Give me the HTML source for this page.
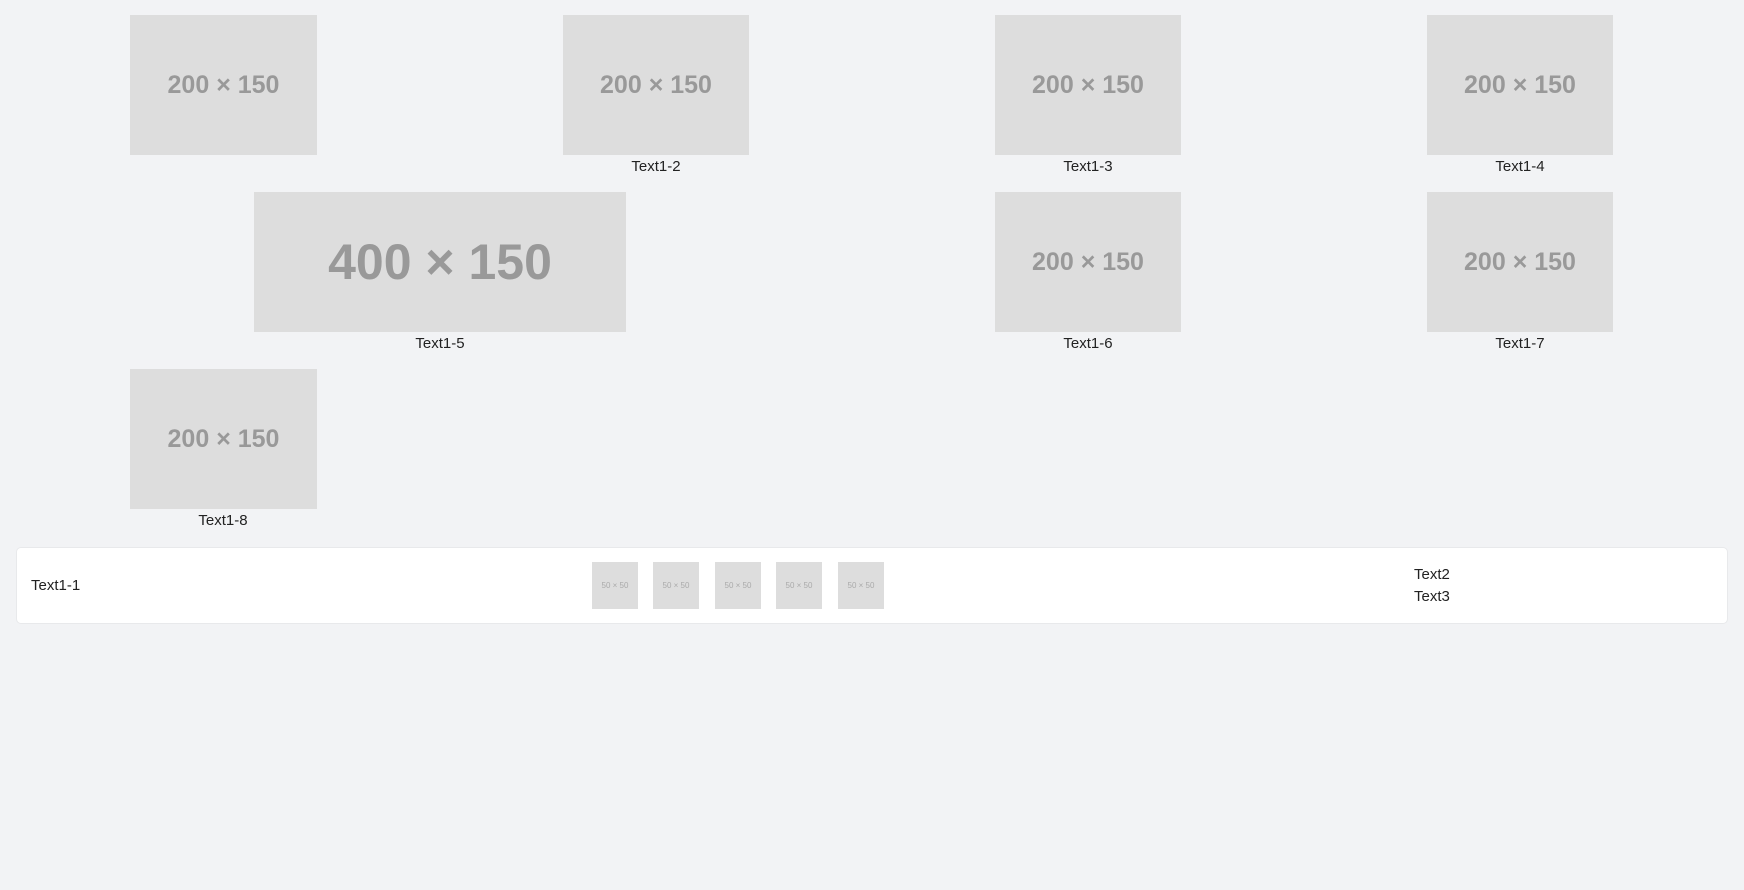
<!DOCTYPE html>
<html><head><meta charset="utf-8"><style>
body{margin:0;width:1744px;height:890px;background:#f2f3f5;position:relative;overflow:hidden;font-family:"Liberation Sans",sans-serif;color:#222;}
.b{position:absolute;background:#dddddd;color:#999;display:flex;align-items:center;justify-content:center;font-weight:bold;font-size:25px;}
.l{position:absolute;font-size:15px;text-align:center;width:200px;line-height:18px;}
.p{position:absolute;left:16px;top:547px;width:1710px;height:75px;background:#fff;border-radius:5px;border:1px solid #e8e9eb;}
.t{position:absolute;background:#dddddd;color:#aaa;font-size:8px;display:flex;align-items:center;justify-content:center;width:46px;height:47px;top:562px;}
.s{position:absolute;font-size:15px;line-height:18px;}
</style></head><body>
<div class="b" style="left:130px;top:15px;width:187px;height:140px">200 × 150</div>
<div class="b" style="left:563px;top:15px;width:186px;height:140px">200 × 150</div>
<div class="b" style="left:995px;top:15px;width:186px;height:140px">200 × 150</div>
<div class="b" style="left:1427px;top:15px;width:186px;height:140px">200 × 150</div>
<div class="l" style="left:556px;top:158px">Text1-2</div>
<div class="l" style="left:988px;top:158px">Text1-3</div>
<div class="l" style="left:1420px;top:158px">Text1-4</div>
<div class="b" style="left:254px;top:192px;width:372px;height:140px;font-size:50px">400 × 150</div>
<div class="b" style="left:995px;top:192px;width:186px;height:140px">200 × 150</div>
<div class="b" style="left:1427px;top:192px;width:186px;height:140px">200 × 150</div>
<div class="l" style="left:340px;top:335px">Text1-5</div>
<div class="l" style="left:988px;top:335px">Text1-6</div>
<div class="l" style="left:1420px;top:335px">Text1-7</div>
<div class="b" style="left:130px;top:369px;width:187px;height:140px">200 × 150</div>
<div class="l" style="left:123px;top:512px">Text1-8</div>
<div class="p"></div>
<div class="s" style="left:31px;top:577px">Text1-1</div>
<div class="t" style="left:592px">50 × 50</div>
<div class="t" style="left:653px">50 × 50</div>
<div class="t" style="left:715px">50 × 50</div>
<div class="t" style="left:776px">50 × 50</div>
<div class="t" style="left:838px">50 × 50</div>
<div class="s" style="left:1414px;top:566px">Text2</div>
<div class="s" style="left:1414px;top:588px">Text3</div>
</body></html>
